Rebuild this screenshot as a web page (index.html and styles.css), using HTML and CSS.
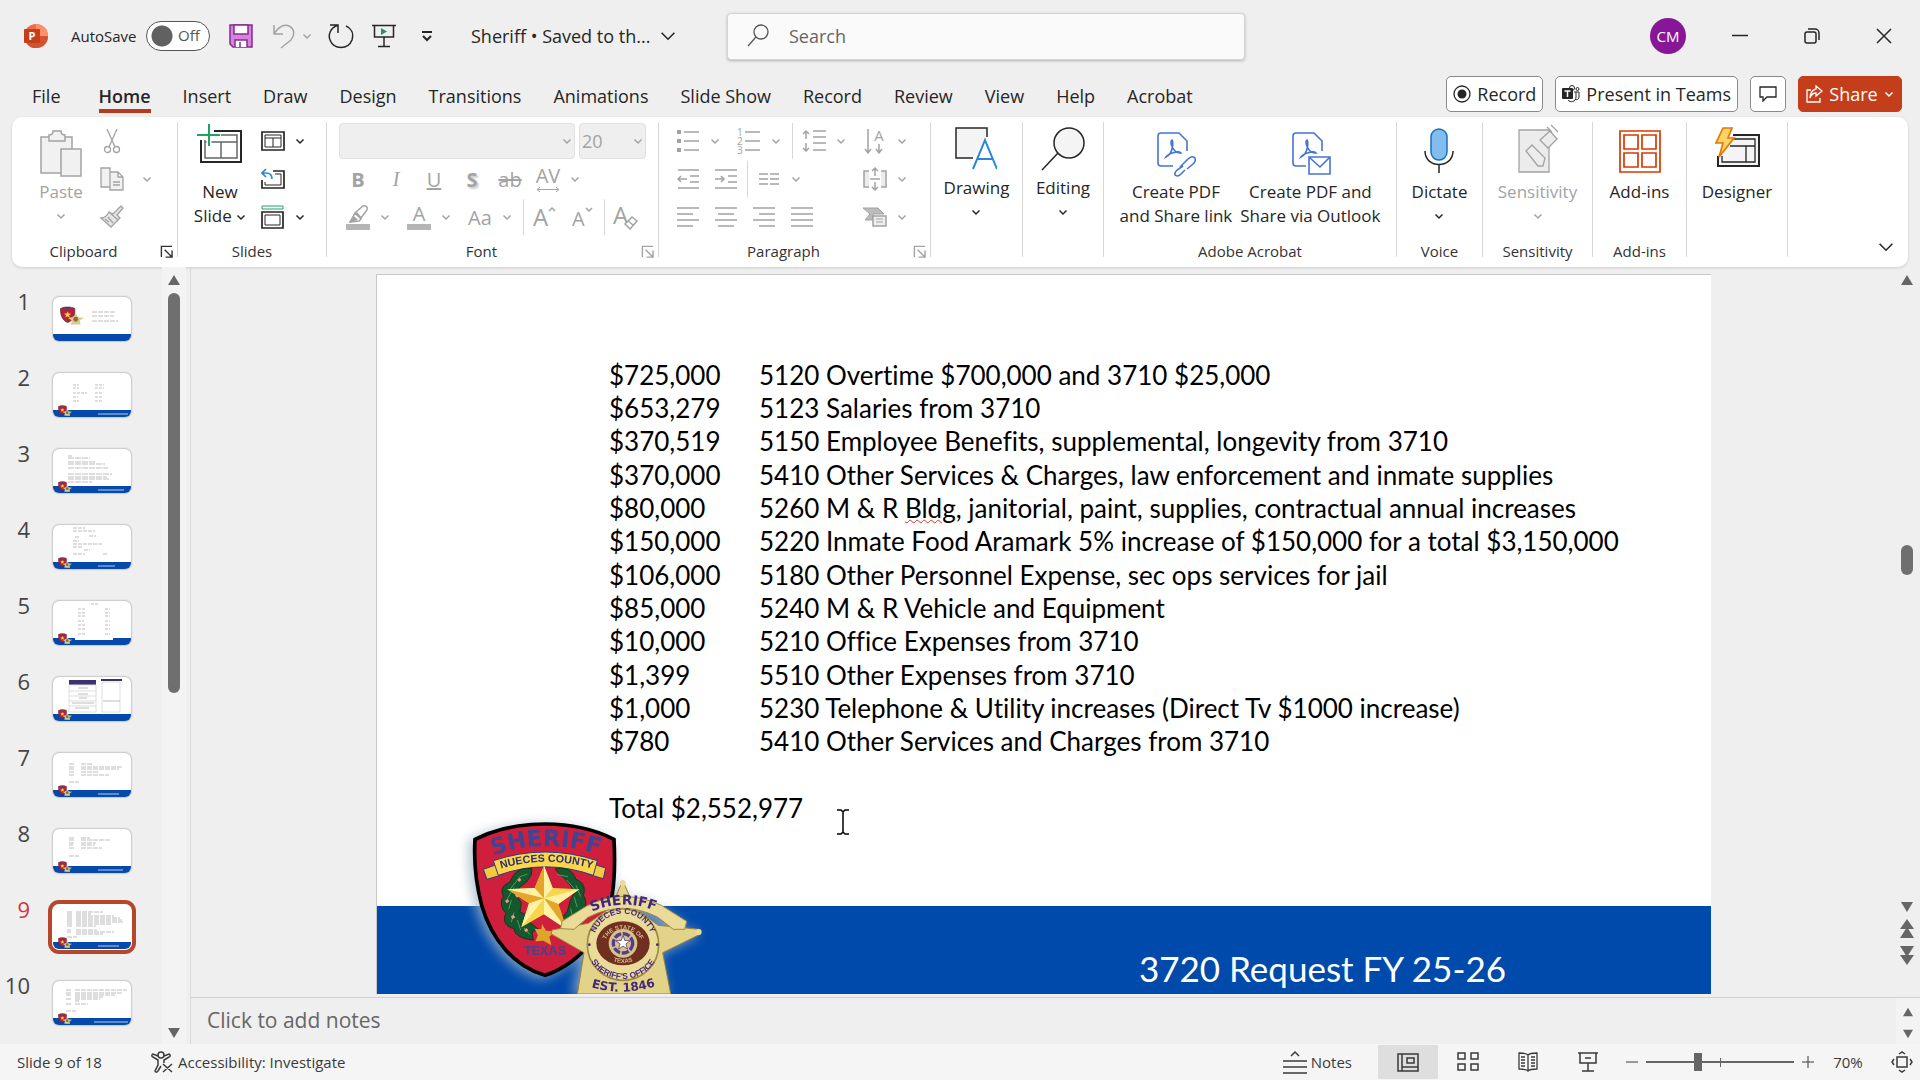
FILE: index.html
```html
<!DOCTYPE html>
<html lang="en">
<head>
    <meta charset="UTF-8">
    <meta name="viewport" content="width=device-width, initial-scale=1.0">
    <title>Sheriff - PowerPoint</title>
    <link rel="stylesheet" href="styles.css">
</head>
<body>

<!-- shared shapes -->
<svg class="defs" width="0" height="0" aria-hidden="true">
    <symbol id="chev" viewBox="0 0 10 10"><path d="M1.500 3.500 5 7 8.500 3.500" fill="none" stroke="currentColor" stroke-width="1.500"/></symbol>
    <symbol id="launch" viewBox="0 0 14 14"><path d="M1.500 13V1.500H13M13 6v7H6M5 5l7 7" fill="none" stroke="currentColor" stroke-width="1.500"/></symbol>
    <symbol id="star" viewBox="-10 -10 20 20"><path d="M0-10 2.400-3.200 9.500-3.100 3.800 1.200 5.900 8.100 0 4 -5.900 8.100 -3.800 1.200 -9.500-3.100 -2.400-3.200Z"/></symbol>
    <!-- badge for the thumbnails -->
    <symbol id="mini" viewBox="90 60 700 522">
        <path d="M105 118C170 85 240 72 315 72s145 14 207 46c6 120-2 220-52 290-42 58-100 100-155 118-90-26-160-105-190-210-20-75-24-130-20-198Z" fill="#b3243b" stroke="#3d1420" stroke-width="16"/>
        <path d="M140 130Q315 80 490 130v34Q315 114 140 164Z" fill="#6a3a68"/>
        <path d="M312 197 338 264 418 268 355 312 380 388 312 343 244 382 267 310 202 268 284 264Z" fill="#f8d64c"/>
        <path d="M548 242 585 325 655 376 778 388 782 402 668 458 692 582H412L432 458 334 402 336 390 445 370 514 322Z" fill="#dccb84"/>
        <circle cx="549" cy="430" r="70" fill="#8a6a55"/>
    </symbol>
</svg>

<header class="titlebar">
    <div class="title-left">
        <svg class="app-icon" width="24" height="24" viewBox="0 0 24 24"><circle cx="12" cy="12" r="12" fill="#ed6c47"/><path d="M12 0a12 12 0 0 1 12 12H12Z" fill="#ff8f6b"/><path d="M24 12a12 12 0 0 1-21 8l9-8Z" fill="#d35230"/><rect y="5" width="16" height="14" rx="1" fill="#c43e1c"/><text x="8" y="16" text-anchor="middle" class="app-p">P</text></svg>
        <label class="autosave" for="autosave">AutoSave</label>
        <span class="toggle"><input type="checkbox" id="autosave"><span>Off</span></span>
        <div class="qat">
            <button aria-label="Save"><svg width="24" height="24" viewBox="0 0 24 24"><path d="M1 1h22v22H4l-3-3Z" fill="#d583dd" stroke="#862a91" stroke-width="1.500"/><path d="M5 1h14v9H5Z" fill="#fff" stroke="#862a91" stroke-width="1.500"/><path d="M6 23v-7h12v7M11 18v5" fill="#fff" stroke="#862a91" stroke-width="1.500"/></svg></button>
            <button class="off" aria-label="Undo"><svg width="24" height="26" viewBox="0 0 24 26"><path d="M2 2v9h9M2 11C6 4 12 1 17 3c6 3 6 9 2 14l-10 8" fill="none" stroke="currentColor" stroke-width="1.500"/></svg></button>
            <button class="off tiny" aria-label="Undo list"><svg width="10" height="10"><use href="#chev"/></svg></button>
            <button aria-label="Redo"><svg width="26" height="26" viewBox="0 0 26 26"><path d="M2 2h8v8M10 2C2 5 0 12 2 17c4 10 18 10 22 0 2-7-1-12-6-14" fill="none" stroke="currentColor" stroke-width="1.500"/></svg></button>
            <button aria-label="Slide show"><svg width="24" height="24" viewBox="0 0 24 24"><path d="M0 1.500h24M2.500 2v11h19V2M12 13v9M6 22.500h12" fill="none" stroke="currentColor" stroke-width="1.500"/><path d="M9 4v7l6-3.500Z" fill="#2e8f66"/></svg></button>
            <button aria-label="Customize"><svg width="12" height="12" viewBox="0 0 12 12"><path d="M1 2h10M2 6l4 4 4-4" fill="none" stroke="currentColor" stroke-width="2"/></svg></button>
        </div>
        <button class="doc-name">Sheriff • Saved to th... <svg width="16" height="16" viewBox="0 0 10 10"><path d="M1 3l4 4 4-4" fill="none" stroke="currentColor"/></svg></button>
    </div>
    <div class="search">
        <svg width="22" height="24" viewBox="0 0 22 24"><circle cx="14" cy="8" r="7" fill="none" stroke="#555" stroke-width="1.300"/><path d="M9 13 1 22" stroke="#555" stroke-width="1.300"/></svg>
        <input type="text" placeholder="Search" aria-label="Search">
    </div>
    <div class="title-right">
        <button class="avatar">CM</button>
        <button class="win" aria-label="Minimize"><svg width="16" height="16"><path d="M0 7.500h16" stroke="currentColor" stroke-width="1.500"/></svg></button>
        <button class="win" aria-label="Restore"><svg width="16" height="16" viewBox="0 0 16 16" fill="none" stroke="currentColor" stroke-width="1.500"><rect x="1" y="4" width="11" height="11" rx="2"/><path d="M4 1h7a4 4 0 0 1 4 4v7"/></svg></button>
        <button class="win" aria-label="Close"><svg width="16" height="16" viewBox="0 0 16 16"><path d="m1 1 14 14M15 1 1 15" stroke="currentColor" stroke-width="1.500"/></svg></button>
    </div>
</header>

<nav class="tabs">
    <a class="file" href="#">File</a>
    <a class="active" href="#">Home</a>
    <a href="#">Insert</a>
    <a href="#">Draw</a>
    <a href="#">Design</a>
    <a href="#">Transitions</a>
    <a href="#">Animations</a>
    <a href="#">Slide Show</a>
    <a href="#">Record</a>
    <a href="#">Review</a>
    <a href="#">View</a>
    <a href="#">Help</a>
    <a href="#">Acrobat</a>
    <div class="tab-actions">
        <button class="pill"><svg width="18" height="18" viewBox="0 0 18 18"><circle cx="9" cy="9" r="8" fill="none" stroke="currentColor" stroke-width="1.300"/><circle cx="9" cy="9" r="4.500" fill="currentColor"/></svg>Record</button>
        <button class="pill"><svg width="18" height="18" viewBox="0 0 18 18"><circle cx="10" cy="3" r="2.500" fill="none" stroke="currentColor"/><circle cx="15.500" cy="4" r="1.500" fill="none" stroke="currentColor"/><path d="M12 7h5v5c0 3-3 3-4 2M6 15c2 3 8 2 8-3V7" fill="none" stroke="currentColor"/><rect y="3" width="11" height="11" rx="1" fill="currentColor"/><path d="M2.500 6h6M5.500 6v6" stroke="#fff" stroke-width="1.500"/></svg>Present in Teams</button>
        <button class="pill comment" aria-label="Comments"><svg width="18" height="16" viewBox="0 0 18 16"><path d="M1 1h16v10H8l-4 4v-4H1Z" fill="none" stroke="currentColor" stroke-width="1.300"/></svg></button>
        <button class="pill share"><svg width="17" height="18" viewBox="0 0 17 18"><path d="M5 5H1v12h13v-4M10 1l6 5-6 5V8C6 8 5 10 4 13c0-5 2-8 6-9Z" fill="none" stroke="currentColor" stroke-width="1.300"/></svg>Share<svg width="10" height="10"><use href="#chev"/></svg></button>
    </div>
</nav>

<section class="ribbon">
    <div class="group g-clipboard">
        <div class="body">
            <button class="big paste off"><svg width="42" height="58" viewBox="0 0 42 58"><g fill="#f1f1f1" stroke="currentColor" stroke-width="1.500"><path d="M1 15h31v36H1Z"/><path d="M9 19v-6c2 0 4-1 4-4h8c0 3 2 4 4 4v6Z"/><path d="M21 27h20v27H21Z"/></g></svg>Paste<svg width="10" height="24"><use href="#chev"/></svg></button>
            <div class="stack">
                <div class="row"><button class="ico off" aria-label="Cut"><svg width="18" height="26" viewBox="0 0 18 26" fill="none" stroke="currentColor" stroke-width="1.300"><path d="M4 1l8 18M14 1 6 19"/><circle cx="4.500" cy="21.500" r="3"/><circle cx="13.500" cy="21.500" r="3"/></svg></button></div>
                <div class="row"><button class="ico off" aria-label="Copy"><svg width="24" height="24" viewBox="0 0 24 24" fill="#f1f1f1" stroke="currentColor" stroke-width="1.300"><path d="M1 1h9v19H1ZM10 5h8l5 5v13H10ZM18 5v5h5M13 15h7M13 18h7"/></svg></button><button class="tiny off" aria-label="Copy list"><svg width="10" height="10"><use href="#chev"/></svg></button></div>
                <div class="row"><button class="ico off" aria-label="Format painter"><svg width="24" height="24" viewBox="0 0 24 24" fill="#e6e6e6" stroke="currentColor" stroke-width="1.300"><path d="M21 1l2 2-6 7 3 3-9 9L1 13c4 0 6-2 8-6l4 2Z"/><path d="m9 7 9 8M5 14l4 3M8 12l5 6"/></svg></button></div>
            </div>
        </div>
        <div class="label"><span>Clipboard</span><button aria-label="Clipboard options"><svg width="13" height="13"><use href="#launch"/></svg></button></div>
    </div>

    <div class="group g-slides">
        <div class="body">
            <button class="big new"><svg width="46" height="58" viewBox="0 0 46 58"><path d="M17 9h27v31H4V18" fill="#fff" stroke="currentColor" stroke-width="2"/><path d="M22 13h18v23H8V18M8 20h32M24 20v16" fill="none" stroke="#666" stroke-width="1.500"/><path d="M12 2v22M0 13h24" stroke="#fff" stroke-width="5"/><path d="M12 2v22M0 13h23" stroke="#21a366" stroke-width="2"/></svg><span>New<br>Slide <svg width="10" height="10"><use href="#chev"/></svg></span></button>
            <div class="stack">
                <div class="row"><button class="ico" aria-label="Layout"><svg width="24" height="20" viewBox="0 0 24 20" fill="none" stroke="currentColor"><path d="M1 1h22v18H1Z" stroke-width="1.700"/><path d="M4 4h16v12H4ZM4 7h16M12 7v9"/></svg></button><button class="tiny" aria-label="Layout list"><svg width="10" height="10"><use href="#chev"/></svg></button></div>
                <div class="row"><button class="ico" aria-label="Reset"><svg width="24" height="22" viewBox="0 0 24 22" fill="none" stroke="currentColor"><path d="M12 3h11v17H1v-8" stroke-width="1.700"/><path d="M14 6h6v11H4v-3"/><path d="M5 1 1 5l4 4M1 5h4c4 0 6 2 6 6" stroke="#2b88d8" stroke-width="1.700"/></svg></button></div>
                <div class="row"><button class="ico" aria-label="Section"><svg width="24" height="24" viewBox="0 0 24 24" fill="none" stroke="currentColor"><path d="M1 1h21v3H1Z" stroke="#21a366"/><path d="M1 7h21v16H1Z" stroke-width="1.700"/><path d="M4 10h15v10H4Z"/></svg></button><button class="tiny" aria-label="Section list"><svg width="10" height="10"><use href="#chev"/></svg></button></div>
            </div>
        </div>
        <div class="label"><span>Slides</span></div>
    </div>

    <div class="group g-font off">
        <div class="rows">
            <div class="row combos">
                <span class="combo name"><select aria-label="Font" disabled><option></option></select><svg width="10" height="10"><use href="#chev"/></svg></span>
                <span class="combo size"><select aria-label="Font size" disabled><option>20</option></select><svg width="10" height="10"><use href="#chev"/></svg></span>
            </div>
            <div class="row">
                <button class="ico"><b>B</b></button>
                <button class="ico"><i class="serif">I</i></button>
                <button class="ico"><u>U</u></button>
                <button class="ico"><b class="shadow">S</b></button>
                <button class="ico"><s>ab</s></button>
                <button class="ico spacing"><span>AV</span><svg width="24" height="7" viewBox="0 0 24 7"><path d="M1 3.500h22M4 1 1 3.500 4 6M20 1l3 2.500L20 6" fill="none" stroke="currentColor"/></svg></button>
                <button class="tiny" aria-label="Spacing list"><svg width="10" height="10"><use href="#chev"/></svg></button>
            </div>
            <div class="row">
                <button class="ico" aria-label="Highlight"><svg width="24" height="26" viewBox="0 0 24 26"><path d="m10 8 7-6c3-1 5 1 4 4l-6 8ZM9 9l6 6-2 2-9 1Z" fill="none" stroke="currentColor" stroke-width="1.500"/><path d="M8 12l4 4-8 2Z" fill="currentColor"/><rect y="20" width="24" height="6" fill="#b5b5b5"/></svg></button>
                <button class="tiny" aria-label="Highlight list"><svg width="10" height="10"><use href="#chev"/></svg></button>
                <button class="ico gap" aria-label="Font color"><svg width="24" height="26" viewBox="0 0 24 26"><text class="glyph-m" x="12" y="17" text-anchor="middle">A</text><rect y="20" width="24" height="6" fill="#b5b5b5"/></svg></button>
                <button class="tiny" aria-label="Font color list"><svg width="10" height="10"><use href="#chev"/></svg></button>
                <button class="ico gap">Aa</button>
                <button class="tiny" aria-label="Case list"><svg width="10" height="10"><use href="#chev"/></svg></button>
                <i class="sep wide"></i>
                <button class="ico" aria-label="Grow font"><svg width="24" height="26" viewBox="0 0 24 26"><text class="glyph-l" x="0" y="22">A</text><path d="M16 7l3-3 3 3" fill="none" stroke="currentColor" stroke-width="1.500"/></svg></button>
                <button class="ico" aria-label="Shrink font"><svg width="22" height="26" viewBox="0 0 22 26"><text class="glyph-m" x="0" y="22">A</text><path d="M14 4l3 3 3-3" fill="none" stroke="currentColor" stroke-width="1.500"/></svg></button>
                <i class="sep"></i>
                <button class="ico" aria-label="Clear formatting"><svg width="26" height="26" viewBox="0 0 26 26"><text class="glyph-l" x="0" y="20">A</text><path d="m12 20 7-7 5 4-7 8ZM15 17l5 4" fill="#fff" stroke="currentColor" stroke-width="1.500"/></svg></button>
            </div>
        </div>
        <div class="label"><span>Font</span><button aria-label="Font options"><svg width="13" height="13"><use href="#launch"/></svg></button></div>
    </div>

    <div class="group g-para off">
        <div class="para">
            <div class="rows">
                <div class="row">
                    <button class="ico" aria-label="Bullets"><svg width="24" height="24" viewBox="0 0 24 24"><path d="M8 3h15M8 12h15M8 21h15" stroke="currentColor" stroke-width="1.500"/><path d="M1 1h4v4H1ZM1 10h4v4H1ZM1 19h4v4H1Z" fill="currentColor"/></svg></button>
                    <button class="tiny" aria-label="Bullets list"><svg width="10" height="10"><use href="#chev"/></svg></button>
                    <button class="ico gap" aria-label="Numbering"><svg width="24" height="26" viewBox="0 0 24 26"><path d="M8 4h15M8 13h15M8 22h15" stroke="currentColor" stroke-width="1.500"/><g class="nums"><text y="8">1</text><text y="17">2</text><text y="26">3</text></g></svg></button>
                    <button class="tiny" aria-label="Numbering list"><svg width="10" height="10"><use href="#chev"/></svg></button>
                    <i class="sep wide"></i>
                    <button class="ico" aria-label="Line spacing"><svg width="24" height="24" viewBox="0 0 24 24" fill="none" stroke="currentColor" stroke-width="1.500"><path d="M11 2h13M11 8h13M11 14h13M11 21h13M4 2v8M4 14v8M1 5l3-3 3 3M1 19l3 3 3-3"/></svg></button>
                    <button class="tiny" aria-label="Line spacing list"><svg width="10" height="10"><use href="#chev"/></svg></button>
                </div>
                <div class="row">
                    <button class="ico" aria-label="Decrease indent"><svg width="22" height="22" viewBox="0 0 22 22" fill="none" stroke="currentColor" stroke-width="1.500"><path d="M1 2h21M13 8h9M13 14h9M1 20h21M1 11h9M4 8l-3 3 3 3"/></svg></button>
                    <button class="ico" aria-label="Increase indent"><svg width="22" height="22" viewBox="0 0 22 22" fill="none" stroke="currentColor" stroke-width="1.500"><path d="M0 2h22M13 8h9M13 14h9M0 20h22M0 11h9M6 8l3 3-3 3"/></svg></button>
                    <i class="sep"></i>
                    <button class="ico" aria-label="Columns"><svg width="20" height="12" viewBox="0 0 20 12"><path d="M0 1h9M11 1h9M0 6h9M11 6h9M0 11h9M11 11h9" stroke="currentColor" stroke-width="1.300"/></svg></button>
                    <button class="tiny" aria-label="Columns list"><svg width="10" height="10"><use href="#chev"/></svg></button>
                </div>
                <div class="row">
                    <button class="ico" aria-label="Align left"><svg width="22" height="20" viewBox="0 0 22 20"><path d="M0 1h22M0 7h16M0 13h22M0 19h16" stroke="currentColor" stroke-width="1.500"/></svg></button>
                    <button class="ico" aria-label="Center"><svg width="22" height="20" viewBox="0 0 22 20"><path d="M0 1h22M3 7h16M0 13h22M3 19h16" stroke="currentColor" stroke-width="1.500"/></svg></button>
                    <button class="ico" aria-label="Align right"><svg width="22" height="20" viewBox="0 0 22 20"><path d="M0 1h22M6 7h16M0 13h22M6 19h16" stroke="currentColor" stroke-width="1.500"/></svg></button>
                    <button class="ico" aria-label="Justify"><svg width="22" height="20" viewBox="0 0 22 20"><path d="M0 1h22M0 7h22M0 13h22M0 19h22" stroke="currentColor" stroke-width="1.500"/></svg></button>
                </div>
            </div>
            <div class="rows end">
                <div class="row"><button class="ico" aria-label="Text direction"><svg width="24" height="26" viewBox="0 0 24 26"><path d="M5 1v23M2 21l3 4 3-4M16 16v8M13 21l3 4 3-4" fill="none" stroke="currentColor" stroke-width="1.500"/><text class="glyph-s" x="16" y="13" text-anchor="middle">A</text></svg></button><button class="tiny" aria-label="Direction list"><svg width="10" height="10"><use href="#chev"/></svg></button></div>
                <div class="row"><button class="ico" aria-label="Align text"><svg width="24" height="24" viewBox="0 0 24 24" fill="none" stroke="currentColor" stroke-width="1.500"><path d="M6 4H1v16h5M18 4h5v16h-5" fill="#ececec"/><path d="M12 1v8M12 15v8M9 4l3-3 3 3M9 20l3 3 3-3M7 12h10"/></svg></button><button class="tiny" aria-label="Align list"><svg width="10" height="10"><use href="#chev"/></svg></button></div>
                <div class="row"><button class="ico" aria-label="SmartArt"><svg width="24" height="20" viewBox="0 0 24 20"><path d="M0 1h15l6 6H10v6H2l5-6Z" fill="#bbb" stroke="currentColor"/><path d="M10 9h13v10H10Z" fill="#eee" stroke="currentColor" stroke-width="1.500"/><path d="M13 12h7M13 15h7" stroke="currentColor"/></svg></button><button class="tiny" aria-label="SmartArt list"><svg width="10" height="10"><use href="#chev"/></svg></button></div>
            </div>
        </div>
        <div class="label"><span>Paragraph</span><button aria-label="Paragraph options"><svg width="13" height="13"><use href="#launch"/></svg></button></div>
    </div>

    <div class="group g-drawing">
        <button class="big high"><svg width="42" height="54" viewBox="0 0 42 54"><path d="M18 36H1V6h31v9" fill="#f4f4f4" stroke="currentColor" stroke-width="1.500"/><path d="M18 47 30 18l12 29M22 37h16" fill="none" stroke="#2b88d8" stroke-width="2"/></svg>Drawing<svg width="10" height="24"><use href="#chev"/></svg></button>
    </div>
    <div class="group g-editing">
        <button class="big high"><svg width="44" height="54" viewBox="0 0 44 54"><circle cx="28" cy="21" r="15" fill="#f4f4f4" stroke="currentColor" stroke-width="1.500"/><path d="M17 31 1 48" stroke="currentColor" stroke-width="1.500"/></svg>Editing<svg width="10" height="24"><use href="#chev"/></svg></button>
    </div>

    <div class="group g-acrobat">
        <div class="body">
            <button class="big"><svg width="40" height="58" viewBox="0 0 40 58" fill="none" stroke="#4573d5" stroke-width="1.600"><path d="M17 44H5c-2 0-3-1-3-3V14c0-2 1-3 3-3h18l8 8v10"/><path d="M10 35c8-4 7-16 6-17-3 1 1 14 9 13-3-3-13 1-15 4Z"/><path d="m27 44-6 4c-5 5 0 8 4 4l4-4M24 45l8-8c6-5 10 0 5 5l-6 5"/></svg>Create PDF<br>and Share link</button>
            <button class="big"><svg width="42" height="58" viewBox="0 0 42 58" fill="none" stroke="#4573d5" stroke-width="1.600"><path d="M17 44H7c-2 0-3-1-3-3V14c0-2 1-3 3-3h18l8 8v10"/><path d="M12 35c8-4 7-16 6-17-3 1 1 14 9 13-3-3-13 1-15 4Z"/><path d="M20 35h21v17H20Zm1 1 10 9 9-9"/></svg>Create PDF and<br>Share via Outlook</button>
        </div>
        <div class="label"><span>Adobe Acrobat</span></div>
    </div>
    <div class="group g-voice">
        <div class="body"><button class="big"><svg width="30" height="58" viewBox="0 0 30 58"><rect x="7" y="7" width="16" height="31" rx="8" fill="#83bdf0" stroke="#1a6fc0" stroke-width="1.500"/><path d="M1 29c0 18 28 18 28 0M15 43v8" fill="none" stroke="currentColor" stroke-width="1.500"/></svg>Dictate<svg width="10" height="24"><use href="#chev"/></svg></button></div>
        <div class="label"><span>Voice</span></div>
    </div>
    <div class="group g-sens">
        <div class="body"><button class="big off"><svg width="42" height="58" viewBox="0 0 42 58" fill="#ececec" stroke="currentColor" stroke-width="1.300"><path d="M2 8h30v42H2Z"/><path d="m9 29 6-6 13 13-2 8h-5ZM23 18l10-9 7 8-9 9ZM30 5l5 5M34 3l7 7"/></svg>Sensitivity<svg width="10" height="24"><use href="#chev"/></svg></button></div>
        <div class="label"><span>Sensitivity</span></div>
    </div>
    <div class="group g-addins">
        <div class="body"><button class="big"><svg width="42" height="58" viewBox="0 0 42 58" fill="#fff" stroke="#d83b01" stroke-width="1.700"><path d="M1 9h40v41H1Z"/><path d="M5 13h14v14H5ZM23 13h14v14H23ZM5 31h14v14H5ZM23 31h14v14H23Z"/></svg>Add-ins</button></div>
        <div class="label"><span>Add-ins</span></div>
    </div>
    <div class="group g-designer">
        <div class="body"><button class="big"><svg width="46" height="58" viewBox="0 0 46 58"><path d="M19 13h26v31H4V34" fill="#f4f4f4" stroke="currentColor" stroke-width="2"/><path d="M18 17h23v23H8v-6M16 24h25M32 24v16" fill="none" stroke="currentColor" stroke-width="1.300"/><path d="M9 6h9l-4 10h6L5 35l4-14H2Z" fill="#fdd26a" stroke="#e07b00" stroke-width="1.700"/></svg>Designer</button></div>
    </div>
    <button class="collapse" aria-label="Collapse ribbon"><svg width="16" height="16" viewBox="0 0 10 10"><path d="M1 3l4 4 4-4" fill="none" stroke="currentColor"/></svg></button>
</section>

<main class="workspace">
    <aside class="panel">
        <ol class="thumbs">
            <li><span>1</span><svg class="thumb" viewBox="0 0 78 44"><rect y="37" width="78" height="7" fill="#0549ab"/><use href="#mini" x="7" y="8" width="24" height="21"/><path class="lines" d="M39 15h24M39 19h22M39 24h26" stroke-dasharray="5 1"/></svg></li>
            <li><span>2</span><svg class="thumb" viewBox="0 0 78 44"><rect y="37" width="78" height="7" fill="#0549ab"/><use href="#mini" x="5" y="32" width="14" height="11"/><path class="lines" d="M20 12h6M20 15h6M20 20h14M20 24h5M20 28h6M42 12h9M42 15h9M42 20h8M42 24h8M42 28h8" stroke-dasharray="3 1"/><path d="M45 41h30" stroke="#b9cdec" stroke-width="1"/></svg></li>
            <li><span>3</span><svg class="thumb" viewBox="0 0 78 44"><rect y="37" width="78" height="7" fill="#0549ab"/><use href="#mini" x="5" y="32" width="14" height="11"/><path class="lines" d="M15 7h4M15 9h22M15 13h28M15 15h37M15 19h40M15 25h44M15 28h39M15 30h42M15 33h24" stroke-dasharray="6 1"/><path d="M45 41h26" stroke="#b9cdec" stroke-width="1"/></svg></li>
            <li><span>4</span><svg class="thumb" viewBox="0 0 78 44"><rect y="37" width="78" height="7" fill="#0549ab"/><use href="#mini" x="5" y="32" width="14" height="11"/><path class="lines" d="M20 3h12M20 6h22M22 12h5M36 11h7M20 16h6M20 19h30M20 22h9M31 25h6M20 29h12M50 29h4" stroke-dasharray="4 1"/><path d="M45 41h17" stroke="#b9cdec" stroke-width="1"/></svg></li>
            <li><span>5</span><svg class="thumb" viewBox="0 0 78 44"><rect y="37" width="78" height="7" fill="#0549ab"/><use href="#mini" x="5" y="32" width="14" height="11"/><path d="M22 2h38v37H22Z" fill="#fff"/><path class="lines" d="M38 3h8M25 8h8M25 12h8M25 15h8M25 20h6M25 24h8M25 28h7M25 33h8M52 8h5M52 12h5M52 15h5M52 20h5M52 24h5M52 28h5M52 33h5" stroke-dasharray="3 1"/></svg></li>
            <li><span>6</span><svg class="thumb" viewBox="0 0 78 44"><rect y="37" width="78" height="7" fill="#0549ab"/><use href="#mini" x="5" y="32" width="14" height="11"/><path d="M16 3h27v5H16ZM48 2h21v2H48Z" fill="#3d3172"/><path d="M16 8h27v27H16ZM16 14h27M16 19h27M16 24h27M16 29h27M49 5h18v30H49Z" fill="none" stroke="#ddd"/><path class="lines" d="M25 11h10M25 17h10M26 21h8M19 26h22M22 31h14M50 24h17"/></svg></li>
            <li><span>7</span><svg class="thumb" viewBox="0 0 78 44"><rect y="37" width="78" height="7" fill="#0549ab"/><use href="#mini" x="5" y="32" width="14" height="11"/><path class="lines" d="M16 11h6M16 14h6M16 16h6M16 19h6M16 22h6M28 11h12M28 14h41M28 16h38M28 19h18M28 22h28M16 29h10" stroke-dasharray="5 1"/><path d="M45 41h21" stroke="#b9cdec" stroke-width="1"/></svg></li>
            <li><span>8</span><svg class="thumb" viewBox="0 0 78 44"><rect y="37" width="78" height="7" fill="#0549ab"/><use href="#mini" x="5" y="32" width="14" height="11"/><path class="lines" d="M16 9h6M16 11h6M16 14h6M16 16h4M16 19h5M28 9h9M28 11h30M28 14h15M28 16h14M28 19h21M16 27h10" stroke-dasharray="5 1"/><path d="M45 41h25" stroke="#b9cdec" stroke-width="1"/></svg></li>
            <li class="current"><span>9</span><svg class="thumb" viewBox="0 0 78 44"><rect y="37" width="78" height="7" fill="#0549ab"/><use href="#mini" x="5" y="32" width="14" height="11"/><path class="lines" d="M14 7h6M14 9h6M14 11h6M14 13h6M14 15h6M14 17h6M14 19h6M14 21h6M14 25h4M14 27h4M23 7h27M23 9h15M23 11h38M23 13h44M23 15h46M23 17h48M23 19h35M23 21h20M23 25h21M23 27h38M23 29h27M14 32h10" stroke-dasharray="5 1"/><path d="M45 41h21" stroke="#b9cdec" stroke-width="1"/></svg></li>
            <li><span>10</span><svg class="thumb" viewBox="0 0 78 44"><rect y="37" width="78" height="7" fill="#0549ab"/><use href="#mini" x="5" y="32" width="14" height="11"/><path class="lines" d="M13 9h6M13 12h6M13 14h6M13 18h6M13 23h5M22 9h52M22 12h48M22 14h40M22 16h28M22 18h25M22 20h4M22 23h13M13 30h10" stroke-dasharray="5 1"/><path d="M41 41h34" stroke="#b9cdec" stroke-width="1"/></svg></li>
        </ol>
        <div class="scroll">
            <svg width="14" height="12" viewBox="0 0 14 12"><path d="M7 1l6 10H1Z"/></svg>
            <div class="bar"></div>
            <svg class="down" width="14" height="12" viewBox="0 0 14 12"><path d="M7 11 13 1H1Z"/></svg>
        </div>
    </aside>

    <div class="editor">
        <div class="stage">
            <article class="slide">
                <table>
                    <tr><td>$725,000</td><td>5120 Overtime $700,000 and 3710 $25,000</td></tr>
                    <tr><td>$653,279</td><td>5123 Salaries from 3710</td></tr>
                    <tr><td>$370,519</td><td>5150 Employee Benefits, supplemental, longevity from 3710</td></tr>
                    <tr><td>$370,000</td><td>5410 Other Services &amp; Charges, law enforcement and inmate supplies</td></tr>
                    <tr><td>$80,000</td><td>5260 M &amp; R <span class="typo">Bldg</span>, janitorial, paint, supplies, contractual annual increases</td></tr>
                    <tr><td>$150,000</td><td>5220 Inmate Food Aramark 5% increase of $150,000 for a total $3,150,000</td></tr>
                    <tr><td>$106,000</td><td>5180 Other Personnel Expense, sec ops services for jail</td></tr>
                    <tr><td>$85,000</td><td>5240 M &amp; R Vehicle and Equipment</td></tr>
                    <tr><td>$10,000</td><td>5210 Office Expenses from 3710</td></tr>
                    <tr><td>$1,399</td><td>5510 Other Expenses from 3710</td></tr>
                    <tr><td>$1,000</td><td>5230 Telephone &amp; Utility increases (Direct Tv $1000 increase)</td></tr>
                    <tr><td>$780</td><td>5410 Other Services and Charges from 3710</td></tr>
                    <tr><td colspan="2">&nbsp;</td></tr>
                    <tr><td colspan="2">Total $2,552,977</td></tr>
                </table>
                <footer class="band"><h1>3720 Request FY 25-26</h1></footer>
                <svg class="seal" width="300" height="194" viewBox="0 0 900 582">
                    <path d="M105 118C170 85 240 72 315 72s145 14 207 46c6 120-2 220-52 290-42 58-100 100-155 118-90-26-160-105-190-210-20-75-24-130-20-198Z" fill="#cf1f3c" stroke="#000" stroke-width="11"/>
                    <path id="arc1" d="M142 174Q315 104 494 170" fill="none"/>
                    <text class="seal-a"><textPath href="#arc1" startOffset="50%" text-anchor="middle">SHERIFF</textPath></text>
                    <path d="M130 208l45-16 12 32-46 14ZM497 204l-45-14-10 32 48 14Z" fill="#f5c93e" stroke="#2f3a86" stroke-width="3"/>
                    <path d="M160 182Q315 130 472 182l-12 44Q315 175 175 226Z" fill="#fbd54a" stroke="#2f3a86" stroke-width="3"/>
                    <path id="arc2" d="M172 209Q315 162 468 209" fill="none"/>
                    <text class="seal-b"><textPath href="#arc2" startOffset="50%" text-anchor="middle">NUECES COUNTY</textPath></text>
                    <g fill="#14592e" stroke="#0b2413" stroke-width="2">
                        <path d="M276 206c-34-4-54 8-66 40-22 8-30 24-20 44-10 14-8 34 8 50-12 20-2 40 24 46 2 20 26 32 58 34l-4-24 20-8-26-20-12-24-18-8 4-28-14-20 8-26 22-16 14-22Z"/>
                        <path d="M346 206c30-6 52 4 62 32 22 8 30 26 22 48 12 18 10 40-10 54-2 22-20 34-44 38l-12-22 18-22 8-30 12-24-12-26-20-22-18-16Z"/>
                    </g>
                    <path d="M262 222l-26 10M234 238l-24 30M222 262l-20 34M214 300l-8 28M222 338l-8 28M232 360l10 30M252 384l18 20M352 224l32 6M380 240l26 30M408 256l14 34M402 290l10 32M392 326l6 28" stroke="#4b9a5a" stroke-width="3"/>
                    <path d="M225 285l8-6 6 8-8 6ZM195 302l8-5 5 7-8 6ZM232 238l7-5 5 7-7 6ZM212 350l8-6 6 8-8 5ZM252 390l7-6 6 7-7 6Z" fill="#ef9b8c"/>
                    <path d="M312 197 338 264 418 268 355 312 380 388 312 343 244 382 267 310 202 268 284 264Z" fill="#f8d64c"/>
                    <path d="M312 197 338 264 312 295ZM418 268 355 312 312 295ZM380 388 312 343V295ZM244 382 267 310 312 295ZM202 268 284 264 312 295Z" fill="#fff2a6"/>
                    <path d="M312 197 284 264 312 295ZM380 388 355 312 312 295ZM202 268 267 310 312 295Z" fill="#e3a62b"/>
                    <text class="seal-c" x="315" y="466" text-anchor="middle">TEXAS</text>
                    <path d="M306 372l12 20 28 2-18 16 6 26-24-14-24 2 8-18-10-20 20 2Z" fill="#dda52a"/>
                    <path d="M548 242 585 325 655 376 778 388 782 402 668 458 692 582H412L432 458 334 402 336 390 445 370 514 322Z" fill="#e3d388" stroke="#9c8238" stroke-width="3"/>
                    <circle cx="548" cy="250" r="9" fill="#e9da94"/>
                    <circle cx="776" cy="396" r="9" fill="#e9da94"/>
                    <path d="M440 318Q548 262 664 316L740 364 734 388H700L654 352Q548 298 444 352L402 388 362 386 366 364Z" fill="#eadc98" stroke="#a18a40" stroke-width="3"/>
                    <path id="arc3" d="M438 344Q548 286 664 340" fill="none"/>
                    <text class="seal-d"><textPath href="#arc3" startOffset="50%" text-anchor="middle">SHERIFF</textPath></text>
                    <circle cx="549" cy="434" r="107" fill="#eadc98" stroke="#a18a40" stroke-width="5"/>
                    <path id="arc4" d="M460 430A89 89 0 0 1 638 430" fill="none"/>
                    <text class="seal-e"><textPath href="#arc4" startOffset="50%" text-anchor="middle">NUECES COUNTY</textPath></text>
                    <path id="arc5" d="M442 442A107 95 0 0 0 656 442" fill="none"/>
                    <text class="seal-e"><textPath href="#arc5" startOffset="50%" text-anchor="middle">SHERIFF'S OFFICE</textPath></text>
                    <ellipse cx="549" cy="430" rx="80" ry="66" fill="#71301f"/>
                    <path id="arc6" d="M494 436A55 48 0 0 1 604 436" fill="none"/>
                    <text class="seal-f"><textPath href="#arc6" startOffset="50%" text-anchor="middle">THE STATE OF</textPath></text>
                    <path id="arc7" d="M486 440A63 49 0 0 0 612 440" fill="none"/>
                    <text class="seal-f"><textPath href="#arc7" startOffset="50%" text-anchor="middle">TEXAS</textPath></text>
                    <circle cx="549" cy="430" r="43" fill="#d3c48a"/>
                    <circle cx="549" cy="430" r="29" fill="none" stroke="#5b3a8c" stroke-width="10" stroke-dasharray="22 5"/>
                    <use href="#star" x="526" y="406" width="46" height="46" fill="#fff" stroke="#4b2f80" stroke-width="1"/>
                    <circle cx="448" cy="434" r="4" fill="#43277c"/>
                    <circle cx="652" cy="434" r="4" fill="#43277c"/>
                    <path id="arc8" d="M436 556Q548 596 664 552" fill="none"/>
                    <text class="seal-g"><textPath href="#arc8" startOffset="50%" text-anchor="middle">EST. 1846</textPath></text>
                </svg>
                <svg class="ibeam" width="14" height="26" viewBox="0 0 14 26"><path d="M1 1h4l2 2 2-2h4M7 3v20M1 25h4l2-2 2 2h4" fill="none" stroke="#000" stroke-width="1.500"/></svg>
            </article>
            <div class="scroll">
                <svg width="14" height="12" viewBox="0 0 14 12"><path d="M7 1l6 10H1Z"/></svg>
                <div class="bar"></div>
                <svg class="down" width="14" height="12" viewBox="0 0 14 12"><path d="M7 11 13 1H1Z"/></svg>
                <svg width="16" height="20" viewBox="0 0 16 20"><path d="m8 0 7 10H1ZM8 8l7 11H1Z"/></svg>
                <svg width="16" height="20" viewBox="0 0 16 20"><path d="M8 20 1 10h14ZM8 12 1 1h14Z"/></svg>
            </div>
        </div>
        <div class="notes">
            <textarea aria-label="Notes" placeholder="Click to add notes"></textarea>
            <div class="scroll">
                <svg width="12" height="10" viewBox="0 0 14 12"><path d="M7 1l6 10H1Z"/></svg>
                <svg class="down" width="12" height="10" viewBox="0 0 14 12"><path d="M7 11 13 1H1Z"/></svg>
            </div>
        </div>
    </div>
</main>

<footer class="status">
    <span class="count">Slide 9 of 18</span>
    <button class="access"><svg width="22" height="22" viewBox="0 0 22 22" fill="none" stroke="currentColor" stroke-width="1.500"><circle cx="10" cy="4" r="3"/><path d="M7 5 2 3C0 4 1 6 2 6l5 3v5l-3 6c1 2 2 1 3 0l3-5M13 5l5-2c2 1 1 3 0 3l-5 3v3M12 13l9 8M21 13l-9 8"/></svg>Accessibility: Investigate</button>
    <div class="status-right">
        <button class="notes-btn"><svg width="24" height="24" viewBox="0 0 24 24" fill="none" stroke="currentColor" stroke-width="1.500"><path d="M8 6l4-4 4 4M0 11h24M0 17h24M0 23h24"/></svg>Notes</button>
        <button class="view active" aria-label="Normal"><svg width="22" height="19" viewBox="0 0 22 19" fill="none" stroke="currentColor" stroke-width="1.500"><path d="M1 1h20v17H1ZM5 1v17M5 14h16M10 5h7v5h-7Z"/></svg></button>
        <button class="view" aria-label="Slide sorter"><svg width="22" height="20" viewBox="0 0 22 20" fill="none" stroke="currentColor" stroke-width="1.500"><path d="M1 1h7v6H1ZM14 1h7v6h-7ZM1 12h7v6H1ZM14 12h7v6h-7Z"/></svg></button>
        <button class="view" aria-label="Reading view"><svg width="20" height="20" viewBox="0 0 20 20" fill="none" stroke="currentColor" stroke-width="1.300"><path d="M10 3C8 1 5 1 1 1v16c4 0 7 0 9 2 2-2 5-2 9-2V1c-4 0-7 0-9 2ZM10 3v16M3 5h4M3 8h4M3 11h4M3 14h4M13 5h4M13 8h4M13 11h4M13 14h4"/></svg></button>
        <button class="view" aria-label="Slide show view"><svg width="20" height="20" viewBox="0 0 20 20" fill="none" stroke="currentColor" stroke-width="1.500"><path d="M0 1h20M2 1v10h16V1M7 6h6M10 11v8M4 19h12"/></svg></button>
        <button class="zoom-btn" aria-label="Zoom out"><svg width="12" height="12"><path d="M0 6h12" stroke="currentColor"/></svg></button>
        <input class="zoom" type="range" min="0" max="100" value="34" aria-label="Zoom">
        <button class="zoom-btn" aria-label="Zoom in"><svg width="12" height="12"><path d="M0 6h12M6 0v12" stroke="currentColor"/></svg></button>
        <span class="percent">70%</span>
        <button class="fit" aria-label="Fit slide"><svg width="22" height="22" viewBox="0 0 22 22" fill="none" stroke="currentColor" stroke-width="1.500"><path d="M6 6h10v10H6ZM8 3l3-2 3 2M8 19l3 2 3-2M3 8l-2 3 2 3M19 8l2 3-2 3"/></svg></button>
    </div>
</footer>

</body>
</html>
```
FILE: styles.css
```css
* {
    box-sizing: border-box;
}
body {
    margin: 0;
    height: 100vh;
    display: flex;
    flex-direction: column;
    overflow: hidden;
    background: #efefef;
    color: #262626;
    font-family: "Open Sans", "Noto Sans", sans-serif;
    font-size: 16px;
}
button {
    display: flex;
    align-items: center;
    justify-content: center;
    padding: 0;
    border: none;
    background: none;
    color: inherit;
    font: inherit;
    white-space: nowrap;
}
svg {
    display: block;
    flex: none;
}
.defs {
    position: absolute;
}
.off {
    color: #a3a3a3;
}

/* title bar */
.titlebar {
    display: flex;
    align-items: center;
    height: 72px;
    flex: none;
}
.title-left {
    flex: 0 0 727px;
    display: flex;
    align-items: center;
    padding-left: 24px;
}
.app-p {
    font-size: 11px;
    font-weight: 700;
    fill: #fff;
}
.autosave {
    width: 75px;
    margin-left: 23px;
    font-size: 15px;
}
.toggle {
    position: relative;
    width: 64px;
    height: 30px;
}
.toggle input {
    appearance: none;
    width: 64px;
    height: 30px;
    margin: 0;
    border: 1px solid #555;
    border-radius: 15px;
    background: radial-gradient(circle at 15px 14px, #616161 10px, transparent 11px), #fff;
}
.toggle span {
    position: absolute;
    left: 32px;
    top: 4px;
    font-size: 15px;
    color: #555;
}
.qat {
    display: flex;
    margin-left: 9px;
}
.qat button {
    width: 43px;
    height: 40px;
}
.qat button.tiny {
    width: 14px;
    justify-content: flex-start;
    margin-left: -3px;
    margin-right: 3px;
}
.doc-name {
    margin-left: 23px;
    gap: 10px;
    font-size: 18px;
}
.search {
    flex: 0 1 518px;
    display: flex;
    align-items: center;
    height: 47px;
    padding-left: 19px;
    gap: 18px;
    background: #fafafa;
    border: 1px solid #d4d4d4;
    border-radius: 4px;
    box-shadow: 0 1px 3px rgba(0, 0, 0, 0.25);
}
.search input {
    flex: 1;
    border: none;
    background: none;
    font: inherit;
    font-size: 18px;
}
.search input::placeholder,
.notes textarea::placeholder {
    color: #666;
}
.title-right {
    margin-left: auto;
    display: flex;
    align-items: center;
}
.avatar {
    width: 36px;
    height: 36px;
    margin-right: 18px;
    border-radius: 50%;
    background: #881798;
    color: #fff;
    font-size: 15px;
}
.win {
    width: 72px;
    height: 48px;
}

/* tabs */
.tabs {
    display: flex;
    align-items: flex-start;
    height: 45px;
    flex: none;
    padding: 4px 18px 0 32px;
    gap: 32px;
    font-size: 18px;
}
.tabs a {
    height: 37px;
    line-height: 40px;
    color: inherit;
    text-decoration: none;
    white-space: nowrap;
}
.tabs .file {
    margin-right: 6px;
}
.tabs .active {
    font-weight: 600;
    border-bottom: 4px solid #b83a1d;
}
.tab-actions {
    margin-left: auto;
    display: flex;
    gap: 12px;
}
.pill {
    height: 36px;
    padding: 0 6px;
    gap: 6px;
    background: #fff;
    border: 1px solid #8a8a8a;
    border-radius: 5px;
}
.pill.comment {
    width: 36px;
}
.pill.share {
    width: 104px;
    background: #c43e1c;
    border-color: #c43e1c;
    color: #fff;
}

/* ribbon */
.ribbon {
    display: flex;
    height: 150px;
    flex: none;
    margin: 0 12px;
    padding-top: 5px;
    background: #fff;
    border-radius: 10px;
    box-shadow: 0 1px 3px rgba(0, 0, 0, 0.15);
}
.group {
    height: 135px;
    border-right: 1px solid #d6d6d6;
    flex: none;
}
.g-clipboard { width: 166px; }
.g-slides { width: 149px; }
.g-font { width: 332px; }
.g-para { width: 272px; }
.g-drawing { width: 92px; }
.g-editing { width: 81px; }
.g-acrobat { width: 293px; }
.g-voice { width: 86px; }
.g-sens { width: 110px; }
.g-addins { width: 94px; }
.g-designer { width: 101px; }
.body {
    display: flex;
    justify-content: center;
    height: 114px;
}
.g-clipboard .body,
.g-slides .body {
    justify-content: flex-start;
}
.label {
    display: flex;
    height: 30px;
    line-height: 30px;
    color: #333;
    font-size: 15px;
}
.label span {
    flex: 1;
    text-align: center;
}
.label button {
    width: 22px;
}
.off .label button {
    color: #a3a3a3;
}
.big {
    flex-direction: column;
    justify-content: flex-start;
    line-height: 24px;
    font-size: 17px;
}
.big.high {
    margin: 0 auto;
}
.paste {
    width: 60px;
    margin-left: 19px;
}
.new {
    width: 68px;
    margin-left: 8px;
}
.new span svg {
    display: inline-block;
}
.g-acrobat .body {
    gap: 8px;
}
.row {
    display: flex;
    align-items: center;
    height: 38px;
}
.ico {
    width: 38px;
    height: 38px;
    font-size: 20px;
}
.tiny {
    width: 16px;
    height: 38px;
}
.gap {
    margin-left: 7px;
}
.g-clipboard .stack {
    margin-left: 2px;
}
.g-clipboard .tiny {
    margin-left: 8px;
}
.sep {
    width: 1px;
    height: 36px;
    margin: 0 2px;
    background: #d6d6d6;
}
.sep.wide {
    margin-left: 8px;
}
.g-font .rows {
    padding-left: 12px;
}
.combos {
    gap: 4px;
}
.combo {
    position: relative;
    height: 36px;
}
.combo select {
    appearance: none;
    width: 100%;
    height: 36px;
    padding: 0 2px;
    border: 1px solid #e0e0e0;
    border-radius: 4px;
    background: #efefef;
    color: #a3a3a3;
    font: inherit;
    font-size: 18px;
    opacity: 1;
}
.combo svg {
    position: absolute;
    right: 3px;
    top: 13px;
}
.combo.name { width: 236px; }
.combo.size { width: 67px; }
.serif {
    font-family: "Liberation Serif", serif;
}
.shadow {
    text-shadow: 2px 2px 2px #ccc;
}
.spacing {
    flex-direction: column;
    line-height: 20px;
}
.glyph-s,
.glyph-m,
.glyph-l {
    fill: currentColor;
}
.glyph-s { font-size: 15px; }
.glyph-m { font-size: 20px; }
.glyph-l { font-size: 24px; }
.nums text {
    font-size: 10px;
    fill: currentColor;
}
.para {
    display: flex;
    justify-content: space-between;
    padding: 0 20px 0 10px;
}
.collapse {
    margin-left: auto;
    margin-right: 14px;
    align-self: flex-end;
    height: 40px;
}

/* slide list */
.workspace {
    flex: 1;
    min-height: 0;
    display: flex;
}
.panel {
    width: 191px;
    flex: none;
    display: flex;
    justify-content: space-between;
    border-right: 1px solid #d9d9d9;
}
.thumbs {
    margin: 0;
    padding: 23px 5px 0 0;
    list-style: none;
    overflow: hidden;
}
.thumbs li {
    display: flex;
    height: 76px;
    padding-top: 7px;
}
.thumbs span {
    width: 30px;
    margin-right: 23px;
    margin-top: -11px;
    text-align: right;
    font-size: 22px;
    line-height: 30px;
    color: #444;
}
.thumb {
    width: 78px;
    height: 44px;
    background: #fff;
    border-radius: 6px;
    box-shadow: 0 0 2px rgba(0, 0, 0, 0.5);
}
.lines {
    fill: none;
    stroke: #888;
    stroke-width: 1px;
    opacity: 0.55;
}
.current .thumb {
    box-shadow: 0 0 0 1px #fff, 0 0 0 5px #b7472a;
}
.thumbs .current span {
    color: #d13438;
}
.scroll {
    width: 24px;
    flex: none;
    display: flex;
    flex-direction: column;
    align-items: center;
    background: #f3f3f3;
    fill: #666;
}
.scroll .down {
    margin-top: auto;
}
.panel .scroll {
    padding: 7px 0 5px;
    margin-right: 4px;
}
.bar {
    width: 12px;
    border-radius: 6px;
    background: #6f6f6f;
}
.panel .bar {
    height: 400px;
    margin-top: 7px;
}

/* editor */
.editor {
    flex: 1;
    display: flex;
    flex-direction: column;
}
.stage {
    flex: 1;
    min-height: 0;
    display: flex;
    padding-top: 7px;
}
.slide {
    position: relative;
    flex: 1;
    display: flex;
    flex-direction: column;
    margin: 0 185px 3px;
    overflow: hidden;
    background: #fff;
    border: 1px solid #c8c8c8;
    border-width: 1px 0 0 1px;
    color: #000;
    font-family: Lato, "Open Sans", sans-serif;
    font-variant-ligatures: none;
}
.slide table {
    height: 467px;
    margin: 83px 0 0 232px;
    border-collapse: collapse;
    font-size: 26px;
    line-height: 32px;
    white-space: nowrap;
    align-self: flex-start;
}
.slide td {
    padding: 0;
}
.slide td:first-child {
    min-width: 150px;
}
.typo {
    text-decoration: underline wavy #d13438 1px;
}
.band {
    height: 88px;
    margin-top: auto;
    padding: 40px 205px 0 0;
    background: #004aab;
    color: #fff;
    text-align: right;
}
.band h1 {
    margin: 0;
    font-size: 35px;
    line-height: 44px;
    font-weight: 400;
}
.seal {
    position: absolute;
    left: 63px;
    bottom: 0;
    filter: drop-shadow(-4px 2px 6px rgba(160, 180, 200, 0.8));
}
.seal-a,
.seal-b,
.seal-c,
.seal-d,
.seal-e,
.seal-f,
.seal-g {
    font-family: "Liberation Sans", sans-serif;
    font-weight: 700;
    fill: #3f4590;
}
.seal-a,
.seal-d,
.seal-g {
    font-family: "DejaVu Sans", sans-serif;
}
.seal-a { font-size: 68px; }
.seal-b { font-size: 32px; fill: #26306e; }
.seal-c { font-size: 38px; }
.seal-d { font-size: 41px; fill: #43277c; }
.seal-e { font-size: 25px; fill: #43277c; }
.seal-f { font-size: 18px; fill: #d9b98e; }
.seal-g { font-size: 36px; fill: #43277c; }
.ibeam {
    position: absolute;
    left: 459px;
    top: 534px;
}
.stage .scroll {
    background: none;
    gap: 6px;
    padding-bottom: 32px;
    margin-right: 2px;
    width: 22px;
}
.stage .bar {
    height: 30px;
    margin-top: 253px;
}
.notes {
    display: flex;
    height: 47px;
    border-top: 1px solid #d0d0d0;
}
.notes textarea {
    flex: 1;
    padding: 8px 16px;
    border: none;
    background: none;
    resize: none;
    font: inherit;
    font-size: 21px;
    line-height: 28px;
}
.notes .scroll {
    padding: 9px 0 5px;
}

/* status bar */
.status {
    display: flex;
    align-items: center;
    height: 36px;
    flex: none;
    padding-left: 17px;
    background: #f5f5f5;
    color: #3a3a3a;
    font-size: 15px;
}
.count {
    width: 134px;
}
.access {
    gap: 5px;
}
.status-right {
    margin-left: auto;
    display: flex;
    align-items: center;
    height: 36px;
}
.notes-btn {
    gap: 4px;
    margin-right: 26px;
}
.view {
    width: 60px;
    height: 34px;
}
.view.active {
    background: #dedede;
}
.zoom-btn {
    width: 28px;
    height: 34px;
}
.zoom {
    appearance: none;
    width: 148px;
    height: 18px;
    margin: 0;
    background: linear-gradient(#666, #666) 74px 5px / 1px 9px no-repeat, linear-gradient(#666, #666) 0 8px / 148px 2px no-repeat;
}
.zoom::-webkit-slider-thumb {
    appearance: none;
    width: 8px;
    height: 18px;
    background: #666;
}
.percent {
    width: 52px;
    margin-right: 10px;
    text-align: center;
}
.fit {
    width: 36px;
}
```
